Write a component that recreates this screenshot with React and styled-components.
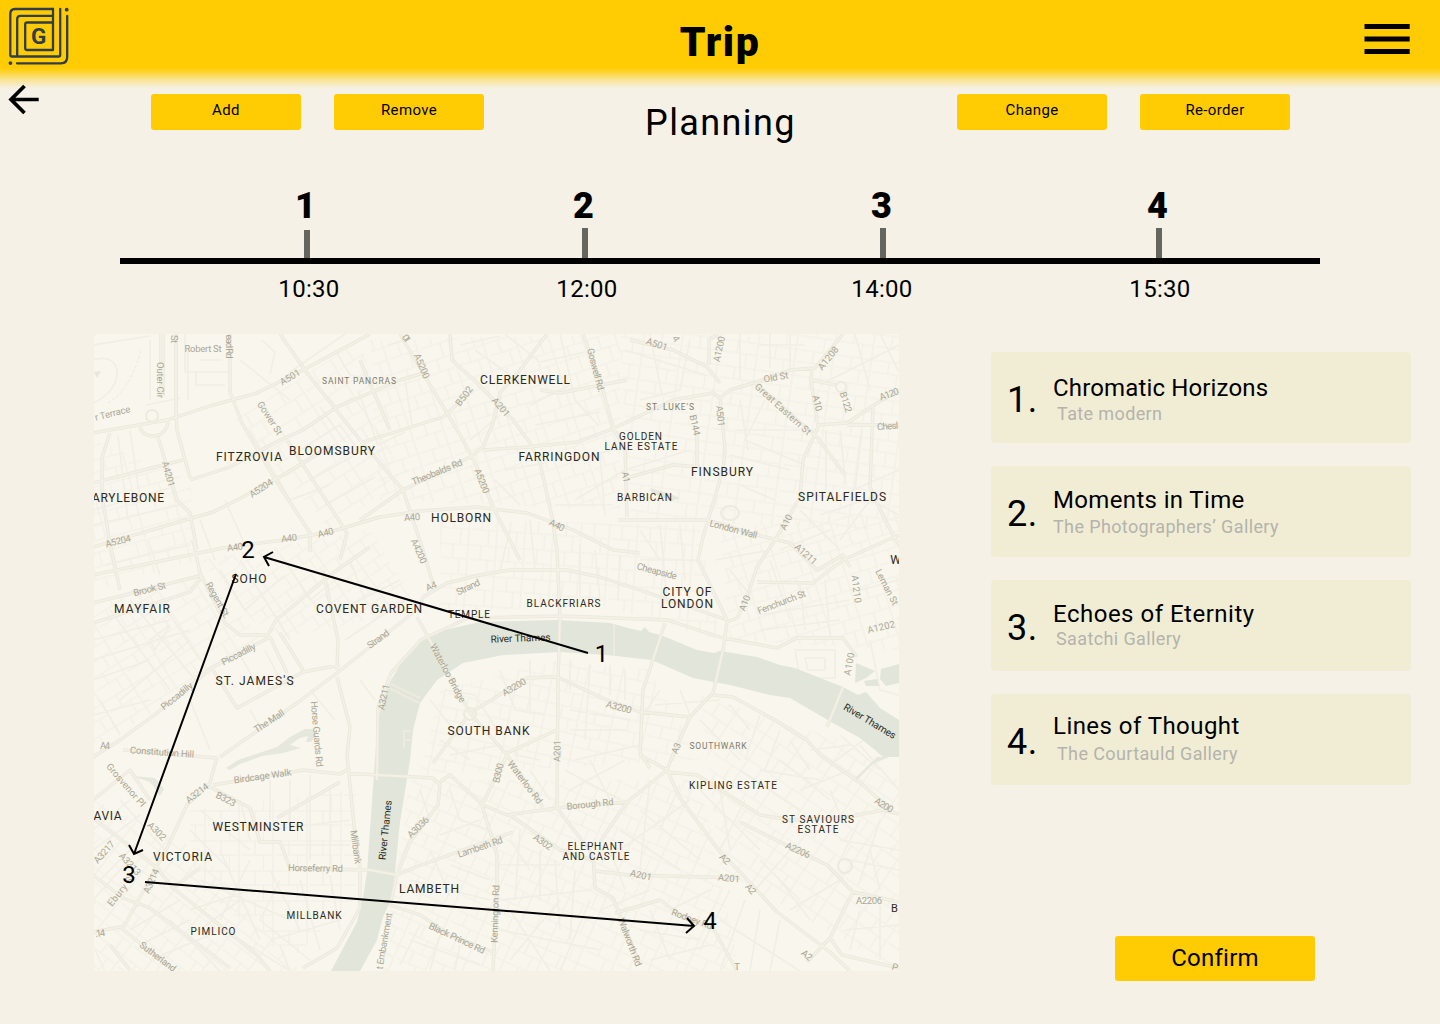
import React from 'react';
import styled, { createGlobalStyle } from 'styled-components';

const GlobalStyle = createGlobalStyle`
  * { box-sizing: border-box; }
  body { margin: 0; background: #f6f1e6; font-family: Roboto, "Liberation Sans", sans-serif; color: #000; }
  h1, h2, h3, p { margin: 0; font-weight: 400; }
  button { border: 0; padding: 0; font: inherit; color: inherit; cursor: pointer; }
`;

const Page = styled.div`
  width: 1440px;
  height: 1024px;
  overflow: hidden;
  background: linear-gradient(#ffcc03 68px, #fcd74a 74px, #f9e596 80px, #f6efd9 87px, #f6f1e6 90px);
`;

const Header = styled.header`
  display: flex;
  justify-content: space-between;
  align-items: flex-start;
  height: 84px;
`;
const HeaderSide = styled.div`
  display: flex;
  width: 80px;
  height: 80px;
`;
const AppTitle = styled.h1`
  padding-top: 18px;
  font-size: 41px;
  line-height: 48px;
  font-weight: 900;
  letter-spacing: 1.5px;
`;

const Toolbar = styled.div`
  display: flex;
  align-items: flex-start;
  height: 86px;
`;
const Back = styled.button`
  display: flex;
  width: 151px;
  background: none;
`;
const Buttons = styled.div`
  display: flex;
  gap: 33px;
  padding-top: 10px;
`;
const Button = styled.button`
  width: ${props => (props.$large ? 200 : 150)}px;
  height: ${props => (props.$large ? 45 : 36)}px;
  padding-bottom: ${props => (props.$large ? 1 : 4)}px;
  border-radius: 3px;
  background: #ffcc03;
  font-size: ${props => (props.$large ? 24 : 15)}px;
  letter-spacing: ${props => (props.$large ? 0.25 : 0.35)}px;
`;
const PageTitle = styled.h2`
  width: 473px;
  padding-top: 17px;
  text-align: center;
  font-size: 36px;
  line-height: 44px;
  letter-spacing: 1.4px;
`;

const Timeline = styled.section`
  width: 1200px;
  height: 164px;
  margin: 0 auto;
  padding-top: 15px;
`;
const Stops = styled.div`
  display: flex;
  height: 73px;
`;
const Stop = styled.div`
  display: flex;
  flex-direction: column;
  align-items: center;
  justify-content: space-between;
  width: 100px;
  margin-left: ${props => props.$gap}px;
`;
const StopNumber = styled.span`
  padding-right: 3px;
  font-size: 36px;
  line-height: 42px;
  font-weight: 900;
`;
const Tick = styled.span`
  width: 6px;
  height: ${props => (props.$short ? 28 : 30)}px;
  background: #666660;
`;
const Line = styled.div`
  height: 6px;
  background: #000;
`;
const Times = styled.div`
  display: flex;
  padding-top: 11px;
`;
const Time = styled.time`
  width: 100px;
  margin-left: ${props => props.$gap}px;
  padding-left: 4px;
  text-align: center;
  font-size: 24px;
  line-height: 28px;
  letter-spacing: 0.3px;
`;

const Content = styled.main`
  display: flex;
  justify-content: space-between;
  padding: 0 29px 0 94px;
`;
const MapFrame = styled.div`
  width: 805px;
  height: 637px;
  border-radius: 4px;
  overflow: hidden;
  background: #f9f6ed;
  svg { display: block; }
`;
const Aside = styled.aside`
  display: flex;
  flex-direction: column;
  width: 420px;
  padding-top: 18px;
`;
const Visits = styled.div`
  display: flex;
  flex-direction: column;
  gap: 23px;
  margin-bottom: 151px;
`;
const Card = styled.div`
  display: flex;
  height: 91px;
  padding: 27px 0 0 16px;
  border-radius: 4px;
  background: #f1edd5;
`;
const CardNumber = styled.span`
  width: 46px;
  font-size: 36px;
  line-height: 42px;
  letter-spacing: 0.5px;
`;
const CardText = styled.div`
  padding-top: ${props => props.$top}px;
  margin-top: -9px;
`;
const CardTitle = styled.h3`
  font-size: 24px;
  line-height: 28px;
  letter-spacing: ${props => props.$tracking}px;
`;
const CardPlace = styled.p`
  padding: ${props => props.$top}px 0 0 ${props => props.$indent}px;
  color: #b4b3ac;
  font-size: 18px;
  line-height: 22px;
  letter-spacing: 0.38px;
`;
const ConfirmRow = styled.div`
  display: flex;
  justify-content: flex-end;
  padding-right: 96px;
`;

const stops = [
  { id: 1, time: '10:30', gap: 137, timeGap: 137 },
  { id: 2, time: '12:00', gap: 178, timeGap: 178 },
  { id: 3, time: '14:00', gap: 198, timeGap: 195 },
  { id: 4, time: '15:30', gap: 176, timeGap: 178 },
];

const visits = [
  { id: 1, title: 'Chromatic Horizons', place: 'Tate modern', indent: 4, top: 4, placeTop: 1, tracking: 0.15 },
  { id: 2, title: 'Moments in Time', place: 'The Photographers’ Gallery', indent: 0, top: 2, placeTop: 2, tracking: 0.35 },
  { id: 3, title: 'Echoes of Eternity', place: 'Saatchi Gallery', indent: 3, top: 2, placeTop: 0, tracking: 0.5 },
  { id: 4, title: 'Lines of Thought', place: 'The Courtauld Gallery', indent: 4, top: 0, placeTop: 3, tracking: 0.45 },
];

// text, centre x, centre y, drawn width, font size
const districts = [
  ['CLERKENWELL', 525, 380, 90, 12],
  ['FITZROVIA', 249, 457, 66, 12],
  ['BLOOMSBURY', 332, 451, 86, 12],
  ['FARRINGDON', 559, 457, 81, 12],
  ['FINSBURY', 722, 472, 62, 12],
  ['SPITALFIELDS', 842, 497, 88, 12],
  ['HOLBORN', 461, 518, 60, 12],
  ['MAYFAIR', 142, 609, 56, 12],
  ['SOHO', 249, 579, 35, 12],
  ['COVENT GARDEN', 369, 609, 106, 12],
  ['CITY OF', 687, 592, 49, 12],
  ['LONDON', 687, 604, 52, 12],
  ["ST. JAMES'S", 254.5, 681, 78, 12],
  ['SOUTH BANK', 488.5, 731, 82, 12],
  ['WESTMINSTER', 258, 827, 91, 12],
  ['VICTORIA', 182.5, 857, 59, 12],
  ['LAMBETH', 429, 888.5, 60, 12],
  ['AVIA', 107.5, 816, 28, 12],
  ['ARYLEBONE', 128, 497.5, 72, 12],
  ['GOLDEN', 640.5, 436.5, 43, 10],
  ['LANE ESTATE', 641, 446.5, 73, 10],
  ['BARBICAN', 644.5, 497, 55, 10],
  ['BLACKFRIARS', 563.5, 603.5, 74, 10],
  ['TEMPLE', 469, 614.5, 42, 10],
  ['KIPLING ESTATE', 733, 785.5, 88, 10],
  ['ST SAVIOURS', 818, 819.5, 72, 10],
  ['ESTATE', 818, 829.5, 41, 10],
  ['ELEPHANT', 595.5, 846.5, 56, 10],
  ['AND CASTLE', 596, 856.5, 67, 10],
  ['MILLBANK', 314, 915.5, 55, 10],
  ['PIMLICO', 213, 931.5, 45, 10],
  ['W', 895.5, 560, 10, 12],
  ['B', 894.5, 908, 6, 11],
];

const quarters = [
  ['SAINT PANCRAS', 359, 381, 74, 8.5],
  ["ST. LUKE'S", 670, 407, 48, 8.5],
  ['SOUTHWARK', 718, 745.5, 57, 8.5],
];

// text, centre x, centre y, drawn width, rotation
const streets = [
  ['Robert St', 203, 349, 37, 0],
  ['St', 174, 339, 8, 90],
  ['ead Rd', 229, 346.5, 24, 90],
  ['Outer Cir', 160.5, 380, 36, 90],
  ['r Terrace', 112.5, 413, 36, -14],
  ['A501', 290, 377, 22, -30],
  ['Gower St', 270, 418, 38, 57],
  ['A4201', 168.5, 474, 26, 75],
  ['A5204', 261, 488, 26, -33],
  ['A5204', 118, 541, 26, -14],
  ['A40', 235, 547, 16, -8],
  ['A40', 289, 538, 16, -6],
  ['A40', 325.5, 532.5, 16, -14],
  ['A40', 412, 517, 16, -4],
  ['A5200', 422, 366, 26, 67],
  ['01', 406.5, 338.5, 8, 55],
  ['B502', 464, 396, 22, -53],
  ['A201', 501, 407, 22, 50],
  ['Goswell Rd.', 596, 370, 45, 75],
  ['Theobalds Rd', 437, 472, 54, -22],
  ['A5200', 482, 481, 26, 68],
  ['A40', 557, 525, 16, 27],
  ['A1', 626, 477, 11, 80],
  ['A4200', 419, 551, 26, 66],
  ['A501', 657, 344, 22, 19],
  ['4', 676, 338.5, 5, 60],
  ['A1200', 719, 349, 26, -78],
  ['Old St', 776, 377, 25, -10],
  ['A1208', 828, 358, 27, -51],
  ['A10', 817.5, 403, 16, 76],
  ['B122', 846, 402, 21, 72],
  ['A120', 889, 394, 20, -20],
  ['Chesl', 887.5, 426, 21, -4],
  ['Great Eastern St', 783, 409, 72, 42],
  ['B144', 695, 425, 21, 78],
  ['A501', 720.5, 416, 21, 84],
  ['A10', 786, 522, 16, -62],
  ['London Wall', 733.5, 529, 49, 15],
  ['A1211', 806, 554, 26, 42],
  ['A1210', 856.5, 589, 28, 83],
  ['Leman St', 887, 587, 39, 63],
  ['A1202', 881, 627, 28, -13],
  ['A100', 849, 664, 23, -80],
  ['Cheapside', 657, 571, 41, 15],
  ['Fenchurch St', 781.5, 602, 51, -21],
  ['A10', 744.5, 603, 16, -68],
  ['Brook St', 149.5, 589, 33, -14],
  ['Regent St.', 218, 600, 40, 61],
  ['Piccadilly', 238.5, 654, 37, -27],
  ['Piccadilly', 176.5, 696, 38, -39],
  ['The Mall', 269, 721, 34, -33],
  ['A4', 105, 745.5, 10, 0],
  ['Constitution Hill', 162, 752, 64, 4],
  ['Horse Guards Rd', 317, 734, 66, 85],
  ['Strand', 378, 639, 25, -36],
  ['Strand', 468, 587, 25, -26],
  ['A4', 431, 586, 11, -22],
  ['Waterloo Bridge', 448, 673, 65, 62],
  ['A3211', 383.5, 697, 26, -78],
  ['A3200', 514, 687, 26, -30],
  ['A3200', 619, 707, 26, 15],
  ['A201', 557, 751, 22, -89],
  ['A3', 676, 748, 11, -68],
  ['Grosvenor Pl', 126, 785, 54, 49],
  ['A302', 157, 831, 22, 45],
  ['A3214', 197, 793, 26, -38],
  ['B323', 226, 799, 21, 27],
  ['Birdcage Walk', 262.5, 776, 58, -8],
  ['A3217', 104, 852, 26, -48],
  ['A3213', 130, 864, 27, 48],
  ['A3214', 151, 881, 26, -66],
  ['Ebury St', 121, 890, 38, -52],
  ['.14', 100, 933, 10, -8],
  ['Sutherland', 158, 956.5, 43, 37],
  ['Millbank', 356, 847, 34, 82],
  ['Horseferry Rd', 315.5, 868, 55, 1],
  ['A3036', 418, 827, 26, -44],
  ['B300', 498, 773, 20, -76],
  ['Waterloo Rd', 525, 782, 51, 53],
  ['Borough Rd', 590, 804, 47, -6],
  ['Lambeth Rd', 480, 847, 47, -19],
  ['A302', 543, 842, 21, 35],
  ['Kennington Rd', 495, 914, 58, -88],
  ['Black Prince Rd', 457, 938, 61, 25],
  ['t Embankment', 384, 941, 57, -80],
  ['Walworth Rd', 630, 942, 51, 69],
  ['A201', 641, 875, 22, 13],
  ['A2', 725, 859, 11, 42],
  ['A201', 729, 878, 22, 5],
  ['A2', 751, 889, 11, 50],
  ['A2', 807, 955, 11, 40],
  ['Rodney Rd', 692, 919, 43, 20],
  ['A2206', 798, 850, 26, 24],
  ['A2206', 869, 901, 26, 0],
  ['A200', 884, 805, 20, 32],
  ['P', 895, 967, 5, 15],
  ['T', 737, 967, 5, 0],
];

const rivers = [
  ['River Thames', 520.5, 638, 60, -2],
  ['River Thames', 385, 830, 60, -84],
  ['River Thames', 870, 721, 59, 31],
];

const mainRoads = `
M161 334V398 M163 334V396 M176 334V413L177 430L190 478 M230 334V392L235 405L242 423L273 476L310 533V552
M93 433L167 420L210 406L257 393L303 370L370 334 M280 334L307 373L360 440L403 490L423 550L433 584
M140 427C143 440 168 440 168 420 M158 437L177 500L190 513L197 550
M93 483L183 460 M93 547L213 512L237 500L283 475L330 446 M190 480L230 467L280 440L303 430L337 407L400 380L427 372
M93 575L223 548L283 540L330 532L380 517L420 511L477 507L527 513L573 530L613 550L640 553
M287 440L347 533L340 560 M110 433L102 457V497L110 543L120 590
M400 334L427 380L447 413L463 440L477 467L493 507 M450 334L452 360L477 383L513 420L530 443L540 463L552 517L557 550L560 620L558 680L557 808
M547 334L520 370L500 393L493 423L483 447L470 457L403 490L360 520
M360 443L443 417L473 390 M483 450L527 447L577 442L610 430L673 400L713 393L720 398L730 390L763 380L790 370L815 368L843 334
M583 334L600 380L613 427L625 450L627 517 M540 390L560 393L627 380 M360 360L390 430
M630 340L673 350L707 367L720 383 M720 398L725 450L723 470L703 537L698 560L727 620
M755 383L817 437L845 475 M812 368L811 380L818 427L803 460L800 497L787 520L773 543L757 567L747 597L737 618L727 622L723 650L713 693L690 717L673 755L667 770
M817 425L847 423L877 403L900 390 M847 425H900 M873 407L870 487L885 520L900 547 M811 380L836 385
M618 520H707L757 535L790 543L817 570L843 555L850 567 M697 467V434 M630 477L673 465L700 467
M718 334L709 340V365 M493 507L520 560
M193 540L200 573L210 593L225 623L240 635L267 635 M93 603L203 575 M93 623L190 592L203 575
M267 637L276 620L337 570L370 547 M270 637L213 667L157 713L120 740L93 757 M270 637L287 673 M280 633L303 670
M213 670L237 708L303 672L340 665 M220 757L297 703L337 673L370 647L420 607L423 597L447 583L480 575L510 570L567 570L600 577L640 590L727 620
M337 677L350 727L347 755L355 835L360 865V908L337 948L303 968 M323 570L338 640L337 670 M123 750L217 758
M377 780L378 707L391 673L421 640L468 618L560 616L667 620L723 638L777 648L797 638L843 638L857 657
M417 617L470 713L507 755L543 807 M470 713L527 678L557 677L607 700L640 712L690 717 M467 717L433 763 M507 753L557 730
M665 623L643 690L640 753L650 768 M757 582L813 583L843 560L899 535 M843 687L827 727
M713 695L733 697L780 723L807 740L820 755L863 785L893 812 M217 757L210 783L187 805L167 848L123 928
M213 785L303 770L340 774L350 768 M340 782L277 818 M210 787L250 808L260 842L280 842L290 868L370 870L397 875
M93 818L157 868L173 888L257 955L270 971 M93 875L123 898L150 908L230 968 M93 932L120 927L173 970 M173 888L200 868
M348 774H360L433 778L440 785L438 805L410 842L397 875L390 905 M440 782L450 775L483 805L507 815L557 808L627 802L667 770
M507 755L482 805L497 855V888L493 971 M557 808L593 855L595 888L613 898L640 965
M397 875L413 868L513 832 M510 815L560 850L593 860 M627 802L600 842 M390 905L420 915L450 935L493 952
M640 755L667 770L680 798L720 852L740 872L777 912L830 952L850 971 M667 772L697 775L760 815L790 820L843 818L883 810L899 814
M740 822L780 842L827 865L853 892L830 938L807 962 M853 892L899 902 M830 938L842 955L899 968 M595 871L630 875L740 878
M615 913L660 900L680 915L713 928L737 971 M93 800L130 770L150 800 M130 970L110 945
`;

const sideRoads = `
M93 360C125 350 125 390 93 403 M93 345L150 336 M150 340V400 M185 334V372H230 M188 349V400 M200 360H222 M196 372V385H225
M146 405L180 398 M240 360L290 400 M262 340L275 352L270 374 M290 372L345 334 M335 350L350 375L370 380
M300 450L340 425L362 455 M320 407L345 442 M250 430L290 500L330 485 M130 430L140 500 M118 436L128 520
M93 510L170 488 M93 525L180 505 M105 565L190 545 M160 575L148 540 M200 520L215 560 M225 500L245 545
M310 480L360 452 M325 505L375 477 M358 390L378 445L405 432 M405 380L412 425 M388 345L410 338 M460 345L500 336 M475 350L510 375
M505 334L540 362L585 352 M560 334L575 400L598 425 M530 405L570 385 M535 425L600 412 M500 415L470 440 M505 470L545 463
M495 480L520 505 M570 460L612 450 M575 500L625 470L690 450 M555 505H612 M600 455L605 515 M650 334L662 395 M690 340L680 390L640 400
M625 350L705 375 M740 334V380 M760 345H805 M770 334V368 M790 334V370 M820 385L899 345 M855 334L870 390 M880 334L899 372
M740 400L748 450 M765 400L745 440L805 465 M735 430H800 M730 455L790 470 M740 485L775 500 M826 430V490 M840 430L846 485 M862 430L855 490
M830 500L899 470 M820 515L880 495 M840 540L870 500L899 515 M800 510L840 550 M780 550L830 530
M580 545V600 M595 550L600 600 M530 520L535 570 M510 530L500 570 M620 555L618 600 M640 530L660 560 M660 525L667 600 M680 525L685 580
M640 560H700 M715 560L770 550 M730 570L750 595 M770 560L790 620 M800 585L805 630 M825 580L830 635 M760 615L850 600 M860 590L899 580
M760 630L840 620 M870 640L880 690L899 695 M795 650H835V678H800Z M805 658H825V670H808Z
M285 560L310 600L335 580 M240 560L265 600L290 640 M220 570L245 610L285 575 M350 560L365 600 M340 610L400 580 M345 640L405 600
M110 610L170 690 M130 600L195 680 M160 600L200 660 M93 640L170 620 M93 660L190 630 M93 680L150 660 M120 700L190 640 M150 640L170 625L155 650Z
M100 700L120 735 M93 715L150 700 M240 655L260 690 M265 650L280 680 M190 700L210 750 M250 710L262 730 M360 680L375 700 M310 690L335 720
M430 700L450 725 M445 690L475 695L500 735 M500 670L515 710L545 715 M530 660V710 M570 660V690 M590 665L585 740 M610 665V695 M625 670V700
M570 710L630 720 M570 730H625 M575 760L640 745 M660 690L640 720 M680 690L690 715 M655 705L720 700 M700 720L740 760 M730 705L750 730
M760 715L745 760 M780 730L765 770 M790 740L810 770 M810 750L850 745 M840 735L880 770 M860 745L899 790 M830 765L870 735
M440 740L470 760 M450 755L500 745 M520 735L515 755L540 760 M530 770L550 800 M565 770L620 800 M570 790L625 760 M590 760L610 800
M420 790L430 820 M450 790L460 820L490 830 M440 835L480 820 M430 850L450 895 M410 880L490 900 M450 865L490 880 M510 840L530 870
M500 865H560 M520 830L515 900 M540 850V900 M555 860L560 930 M575 870L570 940 M500 900L590 890 M500 930L600 950 M510 960L560 900
M420 925L400 965 M440 935L430 970 M460 945L455 970 M410 940L480 965 M510 910L550 971 M590 900L560 971 M600 910L650 890
M650 910L670 960 M670 910L710 890 M640 930L700 940 M650 960L710 945 M620 830L680 870 M640 810L700 860 M620 850L690 800
M650 780L640 870 M610 850L625 890 M680 785L660 830 M700 790L760 850 M720 790L730 850 M745 800L720 850 M760 860L800 900
M755 890L790 850 M780 880L810 920 M790 910L840 880 M730 890L700 950 M745 900L720 971 M760 910L750 971 M780 920L770 971
M720 920L800 971 M860 820L840 860 M880 820L860 880 M840 840L899 850 M850 860L899 870 M870 850L880 890 M860 910L850 950
M880 905V960 M845 930L899 925 M780 760L830 800 M800 790L850 770 M830 790L840 815 M740 770L800 810 M760 770L820 780
M240 800L250 840 M270 780V820 M290 780V830 M310 775V860 M330 790V865 M270 830L350 820 M280 845H350 M200 810L250 850 M190 830L230 870
M220 850L260 940 M250 860L220 920 M200 880L290 920 M270 870L300 930 M300 880L320 950 M330 875L340 930 M190 910L250 890 M270 940L340 920
M200 930L240 900 M280 880L260 920L310 960 M93 830L130 800 M93 850L140 815 M100 880L140 840 M93 900L120 870 M120 800L165 850
M130 930L180 900 M140 945L190 920 M150 960L210 935 M95 950L105 971 M170 920L220 971 M280 945L290 971 M240 940L290 971
`;

// each mesh is a district: outline points, street angle, block width and height
const meshes = [
  { area: '94,440 190,480 197,560 94,590', angle: -15, w: 19, h: 13 },
  { area: '94,600 200,575 265,640 94,750', angle: -32, w: 18, h: 13 },
  { area: '235,420 360,340 400,480 330,530', angle: -33, w: 20, h: 15 },
  { area: '200,560 370,530 420,610 270,640', angle: -35, w: 15, h: 12 },
  { area: '370,340 620,334 620,510 380,500', angle: -18, w: 16, h: 14 },
  { area: '620,334 899,334 899,530 630,520', angle: 8, w: 19, h: 13 },
  { area: '440,520 700,525 720,640 600,605 440,612', angle: 4, w: 14, h: 15 },
  { area: '720,530 899,510 899,650 730,640', angle: -17, w: 16, h: 14 },
  { area: '440,690 560,660 650,670 700,760 420,775', angle: 12, w: 17, h: 13 },
  { area: '700,695 840,740 899,780 899,971 720,870', angle: 34, w: 18, h: 15 },
  { area: '410,780 700,780 740,971 380,971', angle: 24, w: 17, h: 14 },
  { area: '94,800 200,850 300,971 94,971', angle: 38, w: 18, h: 13 },
  { area: '190,810 355,790 355,900 290,960 190,880', angle: 0, w: 17, h: 15 },
];

const MapText = ({ item, size, turn = 0, spaced }) => {
  const [text, x, y, width] = item;
  return (
    <text
      x={x}
      y={y}
      dy={size * 0.36}
      fontSize={size}
      textAnchor="middle"
      textLength={spaced && text.length > 1 ? width : undefined}
      transform={turn ? `rotate(${turn} ${x} ${y})` : undefined}
    >
      {text}
    </text>
  );
};

const LondonMap = () => (
  <svg width="805" height="637" viewBox="94 334 805 637" fontFamily="Roboto, sans-serif">
    <defs>
      {meshes.map((mesh, i) => (
        <pattern
          key={i}
          id={`mesh${i}`}
          width={mesh.w * 2}
          height={mesh.h * 2}
          patternUnits="userSpaceOnUse"
          patternTransform={`rotate(${mesh.angle})`}
        >
          <path
            d={`M0 1H${mesh.w * 2}M${mesh.w} 1V${mesh.h}M4 ${mesh.h}H${mesh.w * 2}M1 0V${mesh.h * 2}M${mesh.w * 1.5} ${mesh.h}V${mesh.h * 2}`}
            fill="none"
            stroke="#f2efe5"
            strokeWidth="1.2"
          />
        </pattern>
      ))}
    </defs>
    {meshes.map((mesh, i) => <polygon key={i} points={mesh.area} fill={`url(#mesh${i})`} />)}
    <path d={sideRoads} fill="none" stroke="#f1eee4" strokeWidth="1.6" />
    <g fill="#e2e5d9">
      <path d="M375 760L378 720L383 700L391 680L403 660L420 642L445 630L480 622L558 620L610 623L628 628L641 631L645 627L649 632L663 636L697 650L714 653L720 651L757 657L780 665L795 668L843 687L858 695L866 692L880 708L899 720V757H883L875 750L860 738L833 723L790 698L770 695L730 685L693 678L652 660L607 655L560 652L503 655L463 663L437 680L420 703L413 730L410 760L400 822L395 872L391 900L383 917L377 940L360 971H331L357 922L363 898L367 872Z" />
      <path d="M856 663L875 671L866 678L855 683ZM881 669L899 664V683L886 686L880 679ZM864 681L877 679L879 686L866 686Z" />
    </g>
    <g fill="#e6e8dd">
      <path d="M238 760L277 747L290 737L305 729L313 729L316 735L311 742L306 742L308 736L300 738L290 745L301 748L283 753L262 756L240 764L230 770L226 768Z" />
      <path d="M132 776L155 778L164 789L160 796L150 782Z M853 780L877 757H889L873 764L857 780Z M650 488L668 493L680 498L672 501L652 493Z M94 372L101 371L97 378Z" />
    </g>
    <path d="M141 351Q130 390 108 403" fill="none" stroke="#ece9de" strokeDasharray="3 2" />
    <path d={mainRoads} fill="none" stroke="#eae7db" strokeWidth="3.4" strokeLinejoin="round" />
    <path d={mainRoads} fill="none" stroke="#f3f0e5" strokeWidth="1.8" strokeLinejoin="round" />
    <g fill="none" stroke="#edeade" strokeWidth="2">
      <circle cx="841" cy="387" r="5" />
      <circle cx="470" cy="714" r="6" />
      <circle cx="152" cy="416" r="6" />
      <ellipse cx="730" cy="513" rx="9" ry="7" />
      <circle cx="845" cy="866" r="7" />
      <path d="M391 684L420 698M389 688L419 703M404 730V748M404 731H411M404 740H411M614 624V656" />
    </g>
    <g fill="#aaa795">
      {streets.map((item, i) => <MapText key={i} item={item} turn={item[4]} size={9.5} spaced />)}
    </g>
    <g fill="#7d7b6b">
      {quarters.map(item => <MapText key={item[0]} item={item} size={item[4]} spaced />)}
    </g>
    <g fill="#2b2a1c">
      {districts.map(item => <MapText key={item[0]} item={item} size={item[4]} spaced />)}
      {rivers.map((item, i) => <MapText key={i} item={item} turn={item[4]} size={10} spaced />)}
    </g>
    <g fill="none" stroke="#000" strokeWidth="2">
      <path d="M588 653L264 557M273 552L264 557L269 566" />
      <path d="M236 574L134 854M129 845L134 854L143 850" />
      <path d="M145 882L694 926M687 918L694 926L686 933" />
    </g>
    <g fill="#000">
      <MapText item={['1', 601.5, 653.5]} size={24} />
      <MapText item={['2', 248, 549.5]} size={24} />
      <MapText item={['3', 129, 874.5]} size={24} />
      <MapText item={['4', 710, 920]} size={24} />
    </g>
  </svg>
);

const Logo = () => (
  <svg width="80" height="80" viewBox="0 0 80 80">
    <g fill="none" stroke="#303d4b" strokeWidth="2.3" strokeLinecap="round" strokeLinejoin="round">
      <path d="M53 9H15Q10.3 9 10.3 14V55Q10.3 56.5 12 56.5H58.5Q60.2 56.5 60.2 55V8.8" />
      <path d="M53 9V50H27Q25.2 50 25.2 48V24.5Q25.2 22.5 27 22.5H53M53 15.8H20.5Q17.2 15.8 17.2 19V56" />
      <path d="M67.2 16V57Q67.2 63.3 61 63.3H17" />
    </g>
    <circle cx="66.7" cy="9.7" r="1.9" fill="#303d4b" />
    <circle cx="10.4" cy="63.1" r="1.9" fill="#303d4b" />
    <text x="38.7" y="43.8" textAnchor="middle" fontFamily="Roboto, sans-serif" fontSize="22.5" fontWeight="700" fill="#303d4b">G</text>
  </svg>
);

const MenuIcon = () => (
  <svg width="80" height="80" viewBox="0 0 80 80">
    <path d="M4.5 26.5H49.7M4.5 39H49.7M4.5 51.5H49.7" stroke="#000" strokeWidth="5" />
  </svg>
);

const BackIcon = () => (
  <svg width="40" height="32" viewBox="0 84 40 32">
    <path d="M38.7 99.5H11M24.5 86L11 99.5L24.5 113" fill="none" stroke="#000" strokeWidth="3.7" />
  </svg>
);

export default function App() {
  return (
    <Page>
      <GlobalStyle />
      <Header>
        <HeaderSide><Logo /></HeaderSide>
        <AppTitle>Trip</AppTitle>
        <HeaderSide><MenuIcon /></HeaderSide>
      </Header>
      <Toolbar>
        <Back aria-label="Back"><BackIcon /></Back>
        <Buttons>
          <Button>Add</Button>
          <Button>Remove</Button>
        </Buttons>
        <PageTitle>Planning</PageTitle>
        <Buttons>
          <Button>Change</Button>
          <Button>Re-order</Button>
        </Buttons>
      </Toolbar>
      <Timeline>
        <Stops>
          {stops.map(stop => (
            <Stop key={stop.id} $gap={stop.gap}>
              <StopNumber>{stop.id}</StopNumber>
              <Tick $short={stop.id === 1} />
            </Stop>
          ))}
        </Stops>
        <Line />
        <Times>
          {stops.map(stop => <Time key={stop.id} $gap={stop.timeGap}>{stop.time}</Time>)}
        </Times>
      </Timeline>
      <Content>
        <MapFrame><LondonMap /></MapFrame>
        <Aside>
          <Visits>
            {visits.map(visit => (
              <Card key={visit.id}>
                <CardNumber>{visit.id}.</CardNumber>
                <CardText $top={visit.top}>
                  <CardTitle $tracking={visit.tracking}>{visit.title}</CardTitle>
                  <CardPlace $top={visit.placeTop} $indent={visit.indent}>{visit.place}</CardPlace>
                </CardText>
              </Card>
            ))}
          </Visits>
          <ConfirmRow>
            <Button $large>Confirm</Button>
          </ConfirmRow>
        </Aside>
      </Content>
    </Page>
  );
}
